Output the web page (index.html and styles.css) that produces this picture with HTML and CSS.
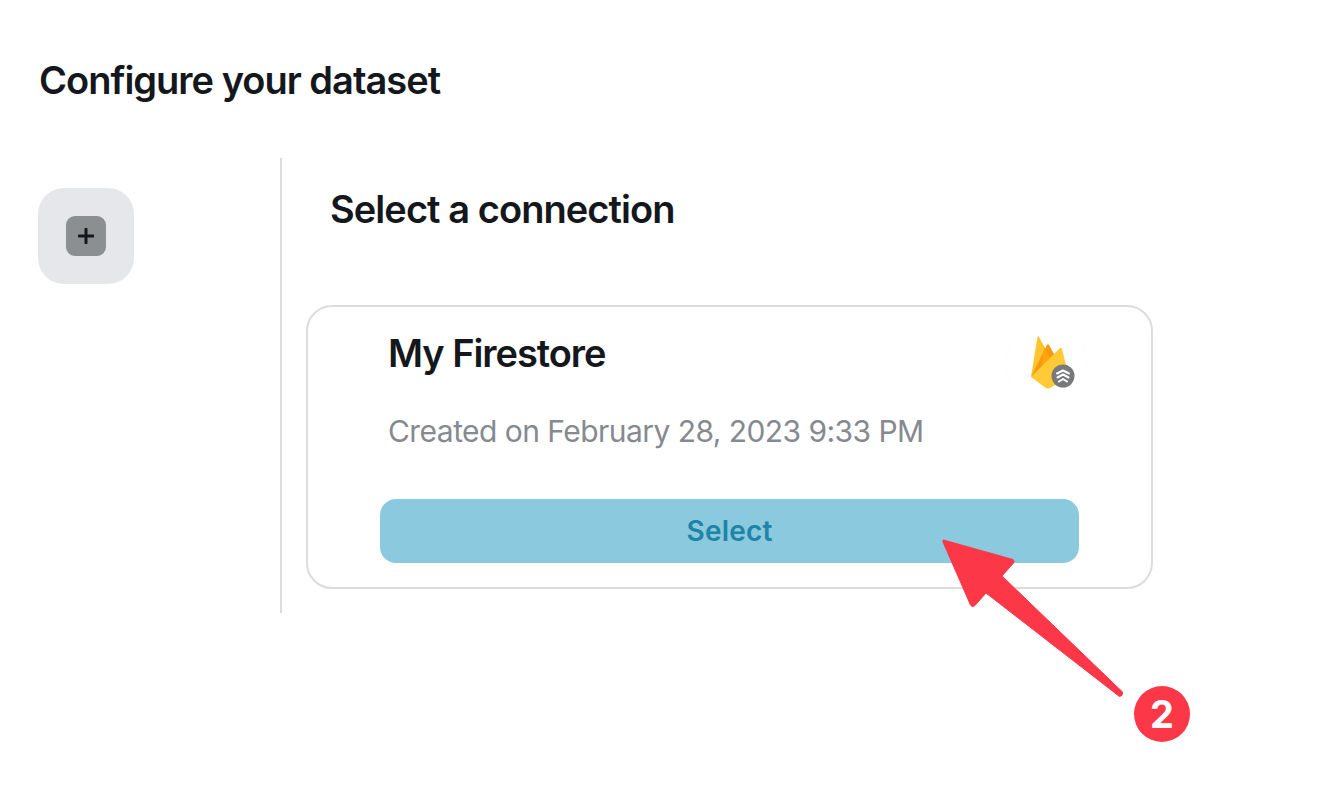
FILE: index.html
```html
<!DOCTYPE html>
<html lang="en">
<head>
<meta charset="utf-8">
<title>Configure your dataset</title>
<link rel="stylesheet" href="styles.css">
</head>
<body>
<main class="page">
  <h1 class="title">Configure your dataset</h1>
  <div class="columns">
    <aside class="rail">
      <div class="tile">
        <div class="tile-inner">
          <svg class="plus" viewBox="0 0 16 16" width="16" height="16"><path d="M8 1v14M1 8h14" fill="none" stroke="#14181d" stroke-width="3" stroke-linecap="round"/></svg>
        </div>
      </div>
    </aside>
    <section class="panel">
      <h2 class="subtitle">Select a connection</h2>
      <article class="card">
        <div class="card-top">
          <h3 class="card-name">My Firestore</h3>
          <div class="logo">
            <svg viewBox="0 0 80 80" width="80" height="80">
              <path d="M25 54 L31.500 14 Q32 12.500 33 14 L44 34 L36 46 Z" fill="#ffc42e"/>
              <path d="M25 54 L41 22 Q42 20.500 43 22 L53 40 Z" fill="#f59a0f"/>
              <path d="M35 47 L44 34 L38 24 Z" fill="#ffa30f"/>
              <path d="M25 54 L54 25 Q55.500 24 56 26 L63 54 L44 65 Q42 66 40 65 Z" fill="#ffca35"/>
              <circle cx="57" cy="53" r="11.500" fill="#77797a"/>
              <path d="M51 50.500 L57 47.500 L63 50.500M51.500 54.500 L57 51.500 L62.500 54.500M53 58.500 L57 56 L61 58.500" fill="none" stroke="#fff" stroke-width="2" stroke-linecap="round" stroke-linejoin="round"/>
            </svg>
          </div>
        </div>
        <p class="created">Created on February 28, 2023 9:33 PM</p>
        <button class="select" type="button">Select</button>
      </article>
    </section>
  </div>
</main>
<div class="callout">
  <svg class="arrow" viewBox="0 0 1334 794" width="1334" height="794">
    <path d="M943.500 540 L1013 559.500 Q1015 561 1013.500 563 L1002 576 L1122.500 692 Q1123 696 1119.500 696.500 L986 593 L975 605.500 Q972.500 608 970.500 605 L943 542 Q942.500 540 943.500 540 Z" fill="#fb3748" stroke="#fb3748" stroke-width="1" stroke-linejoin="round"/>
  </svg>
  <div class="step">2</div>
</div>
</body>
</html>
```

FILE: styles.css
```css
* { box-sizing: border-box; }
html, body { margin: 0; padding: 0; }
body {
  width: 1334px;
  height: 794px;
  overflow: hidden;
  background: #fff;
  font-family: Inter, "Liberation Sans", sans-serif;
  color: #14181d;
  position: relative;
}
.page { padding: 56px 0 0 39px; }
.title {
  margin: 0;
  font-size: 38px;
  line-height: 48px;
  font-weight: 600;
  letter-spacing: -1px;
}
.columns { display: flex; margin-top: 54px; }
.rail { width: 243px; height: 455px; padding-top: 30px; border-right: 2px solid #dcdcdc; flex: none; }
.tile {
  width: 96px;
  height: 96px;
  margin-left: -1px;
  border-radius: 26px;
  background: #e5e7ea;
  display: flex;
  align-items: center;
  justify-content: center;
}
.tile-inner {
  width: 40px;
  height: 40px;
  border-radius: 9px;
  background: #8c8f91;
  display: flex;
  align-items: center;
  justify-content: center;
}
.panel { margin-left: 24px; }
.subtitle {
  margin: 27px 0 0 24px;
  font-size: 38px;
  line-height: 48px;
  font-weight: 600;
  letter-spacing: -0.93px;
}
.card {
  margin-top: 72px;
  width: 847px;
  height: 284px;
  border: 2px solid #dcdcdc;
  border-radius: 26px;
  padding: 16px 72px 0;
}
.card-top { display: flex; justify-content: space-between; align-items: flex-start; padding-left: 8px; }
.card-name {
  margin: 8px 0 0;
  font-size: 38px;
  line-height: 44px;
  font-weight: 600;
  letter-spacing: -1.05px;
}
.logo { width: 80px; height: 80px; margin-right: -7px; border-radius: 50%; box-shadow: 0 0 0 1px #fdfdfd; }
.created {
  margin: 8px 0 0 8px;
  font-size: 30px;
  line-height: 40px;
  color: #868a8f;
  font-weight: 400;
  letter-spacing: -0.55px;
}
.select {
  display: block;
  margin-top: 48px;
  width: 699px;
  height: 64px;
  border: 0;
  border-radius: 16px;
  background: #8bc9df;
  color: #1f84a6;
  font-family: inherit;
  font-size: 28px;
  font-weight: 600;
  letter-spacing: 0.2px;
}
.arrow { position: absolute; left: 0; top: 0; pointer-events: none; }
.step {
  position: absolute;
  left: 1134px;
  top: 686px;
  width: 56px;
  height: 56px;
  border-radius: 50%;
  background: #fb3748;
  color: #fff;
  font-size: 38px;
  font-weight: 700;
  line-height: 56px;
  text-align: center;
}
```
